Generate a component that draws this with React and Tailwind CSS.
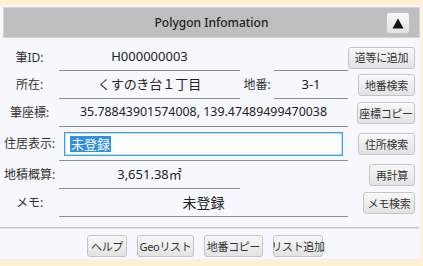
import React from "react";

const font = { fontFamily: '"Noto Sans", "Noto Sans CJK JP", sans-serif' };

function Btn({ children, w }) {
  return (
    <button
      className={`h-[22px] ${w} flex items-center justify-center rounded-[3px] border border-[#c4c4c4] bg-linear-to-b from-[#f8f8f8] to-[#e3e3e3] text-[11px] leading-none text-[#333] whitespace-nowrap tracking-[-0.3px] shadow-[inset_0_1px_0_#ffffff]`}
    >
      {children}
    </button>
  );
}

function Label({ children }) {
  return (
    <div className="flex items-center justify-center text-[12px] text-[#333] whitespace-nowrap">
      {children}
    </div>
  );
}

function Val({ children, span = "", line = true, cls = "text-[13px]" }) {
  return (
    <div
      className={`flex items-center justify-center text-[#222] whitespace-nowrap ${span} ${
        line ? "border-b border-[#8e8e8e]" : ""
      } ${cls}`}
    >
      {children}
    </div>
  );
}

function BtnCell({ children }) {
  return <div className="flex items-center justify-end pr-[6px]">{children}</div>;
}

export default function App() {
  return (
    <div className="w-[423px] h-[266px] bg-[#fdf0d4] pt-[5px]" style={font}>
      <div className="w-[421px] h-[254px] bg-[#f7f8fd] flex flex-col">
        <div className="relative mt-[2px] ml-[3px] mr-[1px] h-[31px] bg-[#bfbfbf] border border-[#d3d3d3] flex items-center justify-center">
          <span className="text-[12px] font-medium text-[#222]">Polygon Infomation</span>
          <button className="absolute right-[9px] top-[4px] w-[24px] h-[22px] rounded-[3px] border border-[#c4c4c4] bg-linear-to-b from-[#f8f8f8] to-[#e3e3e3] flex items-center justify-center">
            <svg width="12" height="11" viewBox="0 0 12 11">
              <polygon points="6,0.5 11.5,10.5 0.5,10.5" fill="#111" />
            </svg>
          </button>
        </div>

        <div className="mt-[6px] grid grid-cols-[59px_181px_34px_74px_73px] grid-rows-[27px_28px_28px_34px_28px_28px]">
          {/* row 1 */}
          <Label>筆ID:</Label>
          <Val>H000000003</Val>
          <div />
          <Val />
          <BtnCell>
            <Btn w="w-[67px]">道等に追加</Btn>
          </BtnCell>

          {/* row 2 */}
          <Label>所在:</Label>
          <Val>くすのき台１丁目</Val>
          <Label>地番:</Label>
          <Val>3-1</Val>
          <BtnCell>
            <Btn w="w-[57px]">地番検索</Btn>
          </BtnCell>

          {/* row 3 */}
          <Label>筆座標:</Label>
          <Val span="col-span-3" cls="text-[12.4px]">
            35.78843901574008, 139.47489499470038
          </Val>
          <BtnCell>
            <Btn w="w-[58px]">座標コピー</Btn>
          </BtnCell>

          {/* row 4 */}
          <Label>住居表示:</Label>
          <div className="col-span-3 border-b border-[#8e8e8e] px-[5px] py-[5px]">
            <div className="h-[24px] border border-[#3aa0d8] bg-white shadow-[inset_0_0_0_1px_#bfe2f3] flex items-center pl-[5px]">
              <span className="bg-[#3390dd] text-white text-[13px] leading-[16px] px-[1px]">未登録</span>
            </div>
          </div>
          <BtnCell>
            <Btn w="w-[57px]">住所検索</Btn>
          </BtnCell>

          {/* row 5 */}
          <Label>地積概算:</Label>
          <Val>3,651.38㎡</Val>
          <div />
          <div />
          <BtnCell>
            <Btn w="w-[46px]">再計算</Btn>
          </BtnCell>

          {/* row 6 */}
          <Label>メモ:</Label>
          <Val span="col-span-3" cls="text-[14px]">未登録</Val>
          <BtnCell>
            <Btn w="w-[52px]">メモ検索</Btn>
          </BtnCell>
        </div>

        <div className="mt-[10px] h-[1px] bg-[#c2c2c2] mr-[2px]" />
        <div className="h-[1px] bg-[#e6e6e6] mr-[2px]" />

        <div className="mt-[6px] flex justify-center gap-[10px] pr-[11px]">
          <Btn w="w-[40px]">ヘルプ</Btn>
          <Btn w="w-[57px]">Geoリスト</Btn>
          <Btn w="w-[59px]">地番コピー</Btn>
          <Btn w="w-[50px]">リスト追加</Btn>
        </div>
      </div>
    </div>
  );
}
